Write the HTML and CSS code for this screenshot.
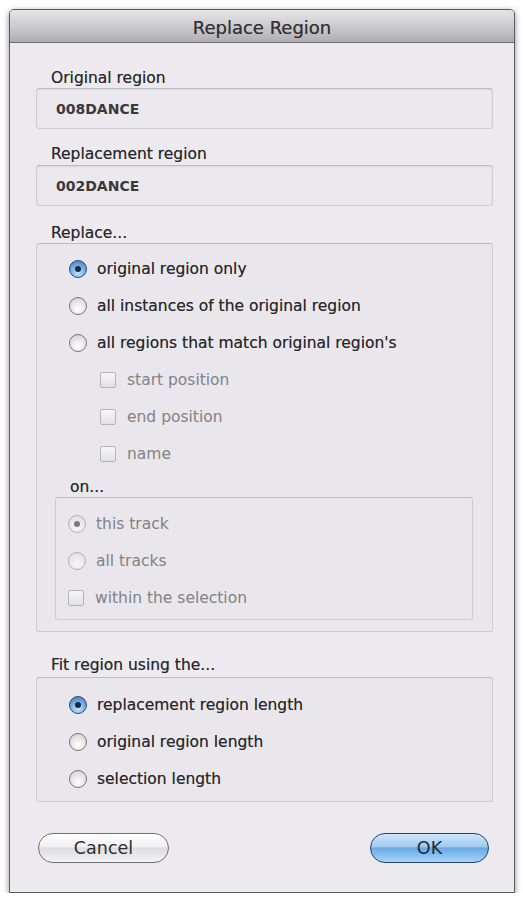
FILE: index.html
```html
<!DOCTYPE html>
<html lang="en">
<head>
    <meta charset="UTF-8">
    <meta name="viewport" content="width=device-width, initial-scale=1.0">
    <title>Replace Region</title>
    <link rel="stylesheet" href="styles.css">
</head>
<body>
    <div class="window">
        <div class="titlebar">Replace Region</div>

        <div class="content">
            <label class="caption">Original region</label>
            <div class="field">008DANCE</div>

            <label class="caption">Replacement region</label>
            <div class="field last">002DANCE</div>

            <label class="caption">Replace...</label>
            <div class="group replace-group">
                <div class="row"><span class="radio checked"></span>original region only</div>
                <div class="row"><span class="radio"></span>all instances of the original region</div>
                <div class="row"><span class="radio"></span>all regions that match original region's</div>
                <div class="row sub disabled"><span class="check"></span>start position</div>
                <div class="row sub disabled"><span class="check"></span>end position</div>
                <div class="row sub disabled"><span class="check"></span>name</div>

                <label class="caption on-caption">on...</label>
                <div class="group on-group">
                    <div class="row disabled"><span class="radio dim-checked"></span>this track</div>
                    <div class="row disabled"><span class="radio"></span>all tracks</div>
                    <div class="row disabled"><span class="check"></span>within the selection</div>
                </div>
            </div>

            <label class="caption fit-caption">Fit region using the...</label>
            <div class="group fit-group">
                <div class="row"><span class="radio checked"></span>replacement region length</div>
                <div class="row"><span class="radio"></span>original region length</div>
                <div class="row"><span class="radio"></span>selection length</div>
            </div>

            <div class="buttons">
                <button class="btn cancel">Cancel</button>
                <button class="btn ok">OK</button>
            </div>
        </div>
    </div>
</body>
</html>
```

FILE: styles.css
```css
body {
    margin: 0;
    background-color: #ffffff;
    font-family: "DejaVu Sans", Verdana, sans-serif;
    color: #29282c;
}
.window {
    width: 504px;
    height: 882px;
    margin: 9px 0 0 9px;
    border: 1px solid #5a595d;
    border-radius: 5px 5px 0 0;
    background-color: #eceaee;
    box-shadow: 0 2px 6px rgba(0, 0, 0, 0.45);
    display: flex;
    flex-direction: column;
    overflow: hidden;
}
.titlebar {
    height: 32px;
    line-height: 35px;
    text-align: center;
    font-size: 18px;
    color: #323135;
    text-shadow: 0 0 0.4px rgba(0, 0, 0, 0.5);
    background: linear-gradient(#e6e5e8, #c9c8cb 55%, #aeadb1);
    border-bottom: 1px solid #6d6c70;
}
.content {
    padding: 25px 21px 0 26px;
    display: flex;
    flex-direction: column;
}
.caption {
    display: block;
    height: 20px;
    line-height: 20px;
    padding-left: 15px;
    font-size: 15.5px;
    color: #29282c;
    text-shadow: 0 0 0.4px rgba(0, 0, 0, 0.5);
}
.field {
    height: 39px;
    line-height: 41px;
    margin-bottom: 15px;
    padding-left: 19px;
    border: 1px solid #cfcdd2;
    border-top-color: #bdbbc0;
    border-radius: 3px;
    background-color: #ebe9ed;
    box-shadow: inset 0 1px 2px rgba(0, 0, 0, 0.08);
    font-size: 14px;
    font-weight: bold;
    color: #3a393d;
}
.field.last {
    margin-bottom: 17px;
}
.field + .caption + .field {
    margin-top: 1px;
}
.group {
    border: 1px solid #cdcbd0;
    border-top-color: #bebcc1;
    border-radius: 3px;
    background-color: #e9e7eb;
}
.replace-group {
    padding: 6px 0 12px 32px;
    height: 369px;
}
.fit-caption {
    margin-top: 23px;
    margin-bottom: 2px;
}
.fit-group {
    padding: 8px 0 0 32px;
    height: 115px;
}
.row {
    height: 37px;
    display: flex;
    align-items: center;
    font-size: 15.5px;
    color: #29282c;
    text-shadow: 0 0 0.4px rgba(0, 0, 0, 0.5);
}
.row.sub {
    padding-left: 31px;
}
.disabled {
    color: #838286;
    text-shadow: none;
}
.on-caption {
    margin-top: 5px;
    padding-left: 1px;
}
.on-group {
    margin: 0 19px 0 -14px;
    padding: 7px 0 3px 12px;
}
/* aqua style radio buttons */
.radio {
    width: 16px;
    height: 16px;
    margin-right: 10px;
    border: 1px solid #77767a;
    border-radius: 50%;
    background: radial-gradient(circle at 50% 70%, #ffffff, #dddcdf 70%, #c4c3c6);
    position: relative;
    flex-shrink: 0;
}
.radio.checked {
    border-color: #2f4d72;
    background: radial-gradient(circle at 50% 75%, #bfe3ff, #6fa9e0 55%, #3f6fa8);
}
.radio.checked::after,
.radio.dim-checked::after {
    content: "";
    position: absolute;
    left: 5px;
    top: 5px;
    width: 6px;
    height: 6px;
    border-radius: 50%;
    background-color: #1b2a3c;
}
.disabled .radio {
    border-color: #b2b1b5;
    background: radial-gradient(circle at 50% 70%, #f7f6f8, #e4e3e6 70%, #d6d5d8);
}
.radio.dim-checked::after {
    background-color: #7a797d;
}
.check {
    width: 14px;
    height: 14px;
    margin-right: 11px;
    border: 1px solid #b4b3b7;
    border-radius: 2px;
    background: linear-gradient(#f6f5f7, #e2e1e4);
    flex-shrink: 0;
}
.buttons {
    display: flex;
    justify-content: space-between;
    margin-top: 31px;
    padding: 0 4px 0 2px;
}
.btn {
    height: 30px;
    border-radius: 15px;
    font-family: "DejaVu Sans", Verdana, sans-serif;
    font-size: 17.5px;
    padding: 0;
    cursor: pointer;
}
.cancel {
    width: 131px;
    border: 1px solid #6f6e72;
    color: #2e2d31;
    background: linear-gradient(#ffffff, #f1f0f2 45%, #dddcdf 50%, #f4f3f5);
}
.ok {
    width: 119px;
    border: 1px solid #26426a;
    color: #1d2a3d;
    background: linear-gradient(#cfe6fb, #9fcaf0 45%, #6aa9e6 50%, #a6d4fb);
}
```
